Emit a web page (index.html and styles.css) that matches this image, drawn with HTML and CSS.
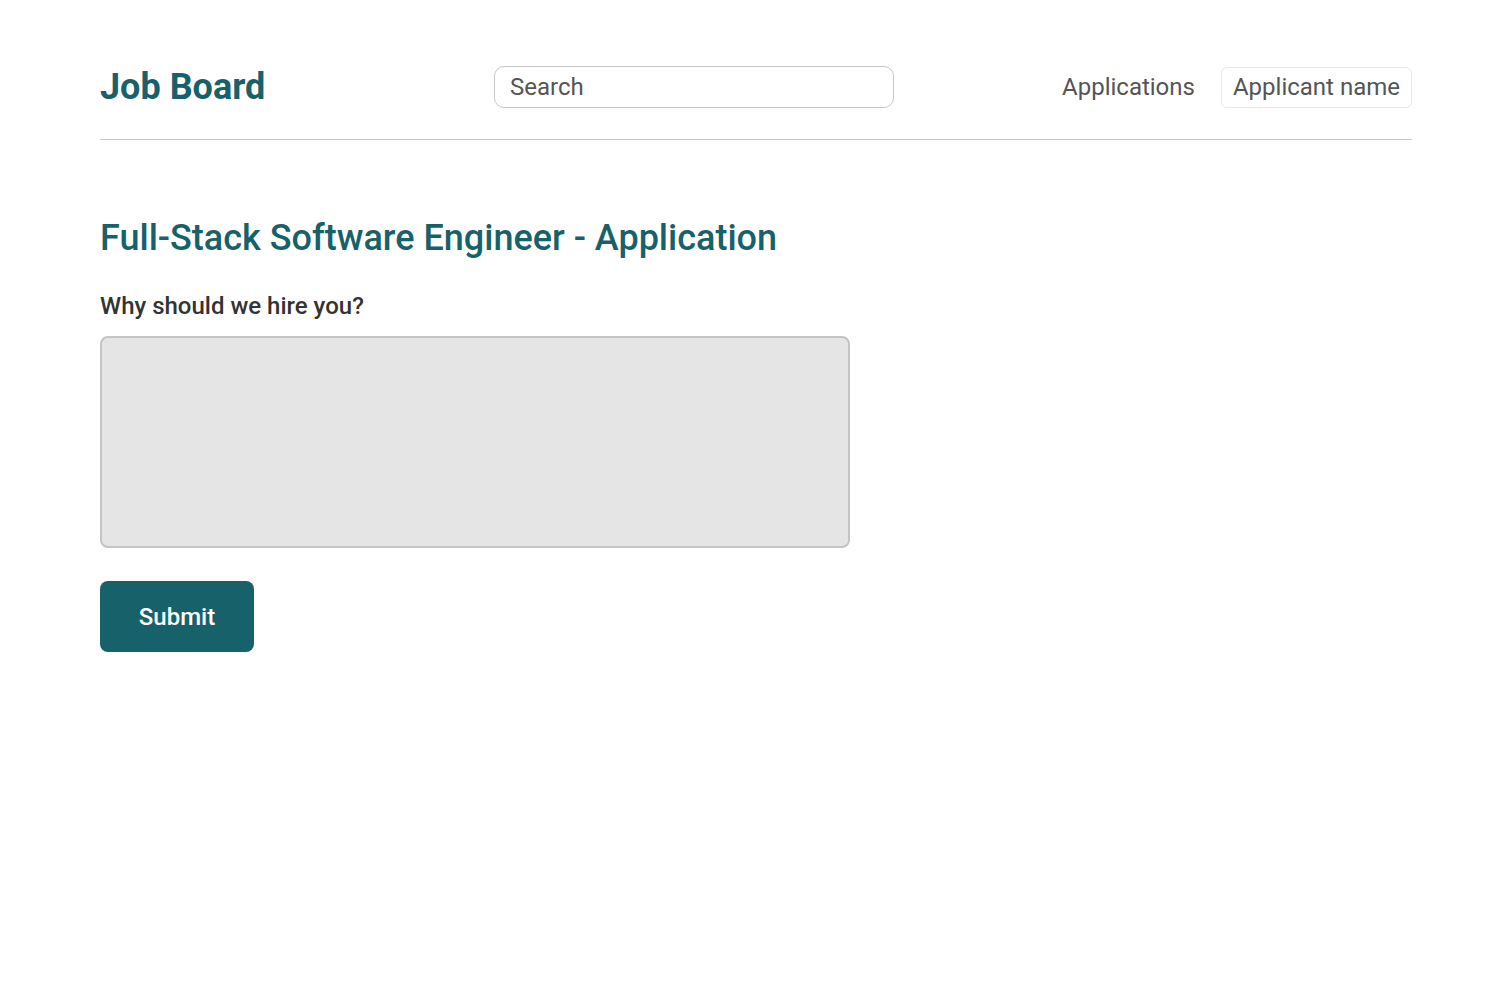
FILE: index.html
```html
<!DOCTYPE html>
<html>
<head>
<meta charset="utf-8">
<link rel="stylesheet" href="styles.css">
</head>
<body>
<div class="page">
  <header class="header">
    <div class="logo">Job Board</div>
    <div class="search">Search</div>
    <nav class="nav">
      <span class="nav-link">Applications</span>
      <span class="nav-user">Applicant name</span>
    </nav>
  </header>
  <main class="main">
    <h1 class="title">Full-Stack Software Engineer - Application</h1>
    <label class="label">Why should we hire you?</label>
    <div class="textarea"></div>
    <button class="submit">Submit</button>
  </main>
</div>
</body>
</html>
```
FILE: styles.css
```css
* { box-sizing: border-box; }
body {
  margin: 0;
  font-family: Roboto, "Liberation Sans", sans-serif;
  background: #fff;
}
.page {
  padding: 0 100px;
}
.header {
  display: flex;
  align-items: center;
  height: 140px;
  padding-top: 66px;
  padding-bottom: 31px;
  border-bottom: 1px solid #c8c8c8;
}
.logo {
  font-size: 36px;
  font-weight: 700;
  color: #17616b;
  width: 394px;
}
.search {
  width: 400px;
  height: 42px;
  border: 1px solid #c8c8c8;
  border-radius: 10px;
  padding: 0 15px;
  display: flex;
  align-items: center;
  font-size: 24px;
  color: #555;
}
.nav {
  display: flex;
  align-items: center;
  gap: 26px;
  margin-left: auto;
}
.nav-link {
  font-size: 24px;
  color: #555;
}
.nav-user {
  font-size: 24px;
  color: #555;
  border: 1px solid #e8e8e8;
  border-radius: 6px;
  height: 41px;
  padding: 0 11px;
  display: flex;
  align-items: center;
}
.main {
  padding-top: 76px;
}
.title {
  margin: 0;
  font-size: 36px;
  font-weight: 500;
  color: #17616b;
  line-height: 44px;
}
.label {
  display: block;
  margin-top: 32px;
  font-size: 24px;
  font-weight: 500;
  color: #333;
  line-height: 28px;
}
.textarea {
  margin-top: 16px;
  width: 750px;
  height: 212px;
  background: #e5e5e5;
  border: 2px solid #c4c4c4;
  border-radius: 8px;
}
.submit {
  margin-top: 33px;
  width: 154px;
  height: 71px;
  border: none;
  border-radius: 8px;
  background: #17616b;
  color: #fff;
  font-family: Roboto, "Liberation Sans", sans-serif;
  font-size: 24px;
  font-weight: 500;
}
```
